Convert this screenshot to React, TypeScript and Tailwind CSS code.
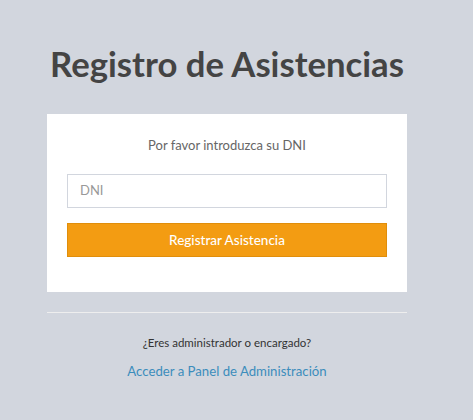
import React from "react";

export default function App() {
  return (
    <div className="min-h-[420px] w-full bg-[#d2d6de]" style={{ fontFamily: "Lato, 'Noto Sans', sans-serif" }}>
      <div className="w-[454px]">
        <div className="mx-auto w-[360px] pt-[44px]">
          <h1 className="text-center text-[34.7px] font-bold leading-[40px] text-[#444] mb-[30px]">Registro de Asistencias</h1>
          <div className="bg-white px-[20px] pt-[21px] pb-[35px]">
            <p className="text-center text-[13px] leading-[20px] text-[#666] mb-[19px]">Por favor introduzca su DNI</p>
            <div className="h-[34px] border border-[#d2d6de] flex items-center px-[12px] text-[13px] text-[#999]">DNI</div>
            <button className="mt-[15px] h-[34px] w-full bg-[#f39c12] border border-[#e08e0b] text-white text-[13.5px] font-medium">Registrar Asistencia</button>
          </div>
          <div className="mt-[20px] border-t border-[#eee]" />
          <p className="mt-[22px] text-center text-[11.5px] leading-[16px] text-[#333]">¿Eres administrador o encargado?</p>
          <p className="mt-[10px] text-center text-[13.2px] leading-[20px] text-[#3c8dbc]">Acceder a Panel de Administración</p>
        </div>
      </div>
    </div>
  );
}
